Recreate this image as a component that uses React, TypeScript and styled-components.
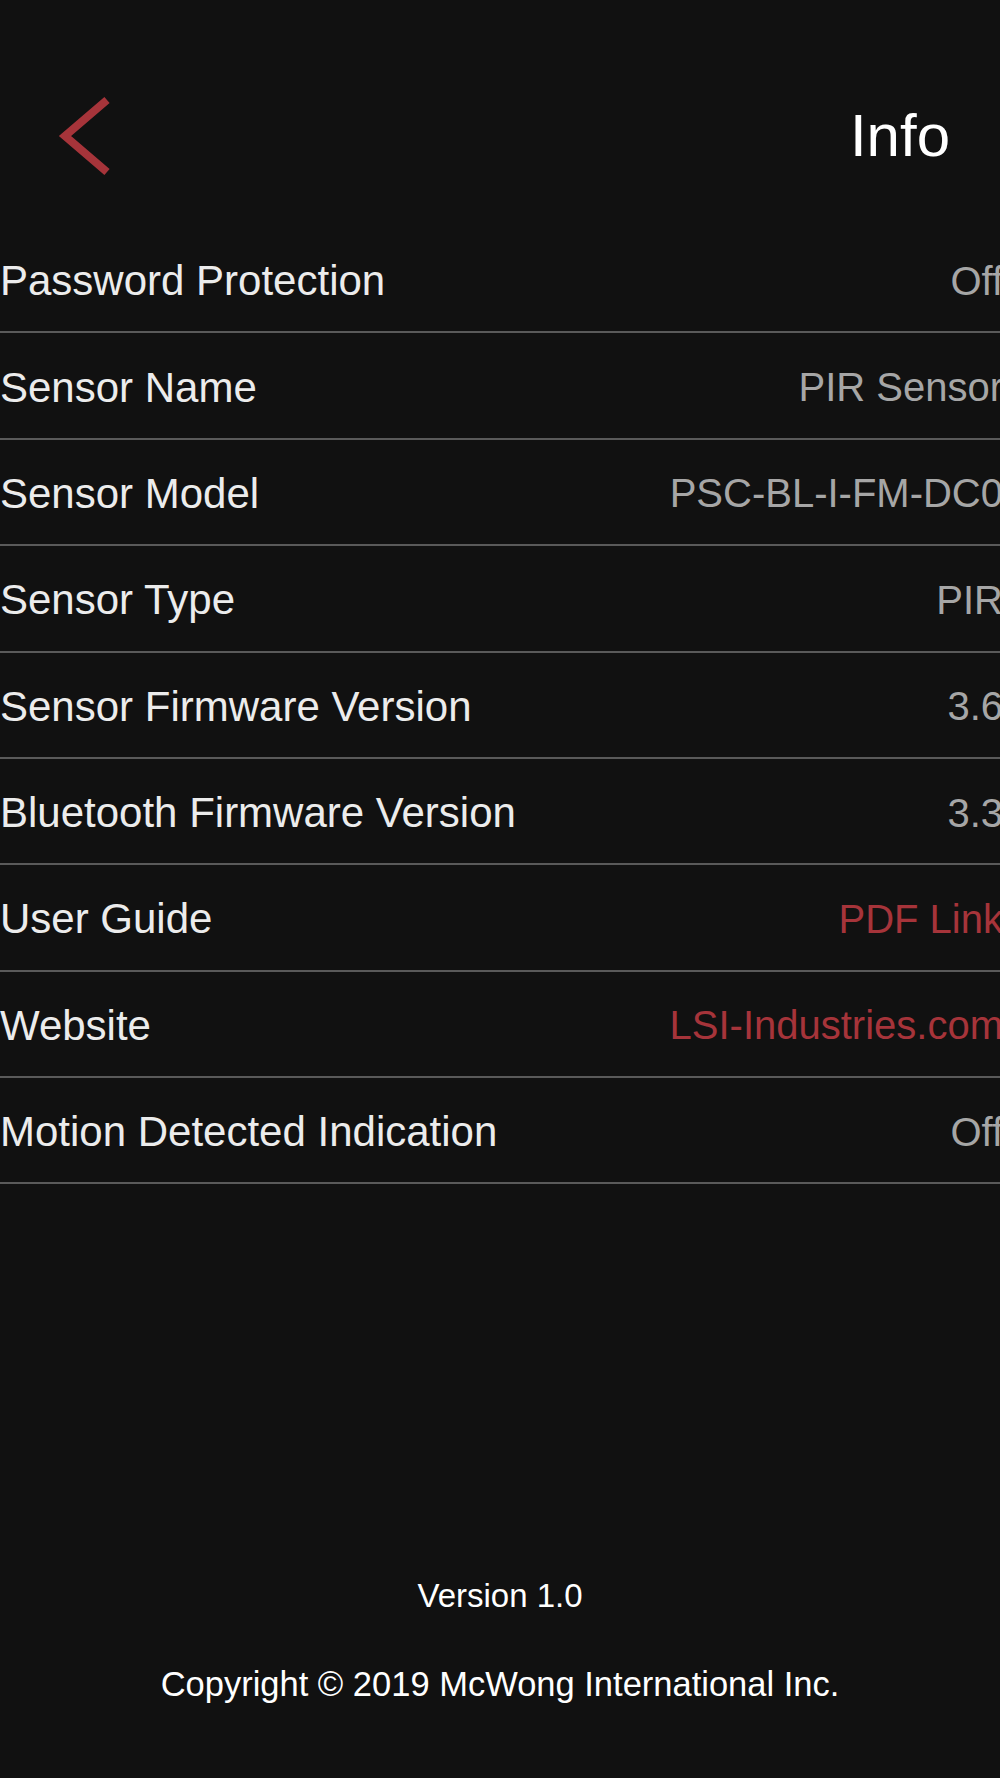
import React from 'react'
import styled, { createGlobalStyle } from 'styled-components'

const GlobalStyle = createGlobalStyle`
  html, body {
    margin: 0;
    padding: 0;
    background-color: #111111;
  }
  body {
    overflow-x: hidden;
    font-family: "Liberation Sans", Arial, sans-serif;
  }
`

const Screen = styled.div`
  width: 1000px;
  min-height: 1778px;
  background-color: #111111;
  display: flex;
  flex-direction: column;
  overflow: hidden;
`

const Header = styled.div`
  height: 227px;
  box-sizing: border-box;
  padding: 44px 50px 0 50px;
  display: flex;
  align-items: center;
  justify-content: space-between;
`

const BackButton = styled.button`
  background: none;
  border: none;
  padding: 0;
  display: flex;
  cursor: pointer;
`

const Title = styled.h1`
  margin: 0;
  font-size: 60px;
  font-weight: 400;
  line-height: 66px;
  color: #ffffff;
`

const List = styled.div`
  display: flex;
  flex-direction: column;
`

const Row = styled.div`
  height: 106.375px;
  box-sizing: border-box;
  display: flex;
  align-items: center;
  justify-content: space-between;
  border-bottom: 2px solid #5a5a5a;
  padding-top: 4px;
`

const Label = styled.span`
  font-size: 42px;
  color: #ececec;
  white-space: nowrap;
`

const Value = styled.span<{ $link?: boolean }>`
  font-size: 40px;
  color: ${(p) => (p.$link ? '#a6343a' : '#a6a6a6')};
  white-space: nowrap;
  margin-right: -3px;
`

const Footer = styled.div`
  margin-top: 392px;
  display: flex;
  flex-direction: column;
  align-items: center;
  gap: 48px;
  color: #ffffff;
`

const VersionText = styled.div`
  font-size: 33px;
  line-height: 40px;
`

const Copyright = styled.div`
  font-size: 34.5px;
  line-height: 40px;
`

const rows: { label: string; value: string; link?: boolean }[] = [
  { label: 'Password Protection', value: 'Off' },
  { label: 'Sensor Name', value: 'PIR Sensor' },
  { label: 'Sensor Model', value: 'PSC-BL-I-FM-DC0' },
  { label: 'Sensor Type', value: 'PIR' },
  { label: 'Sensor Firmware Version', value: '3.6' },
  { label: 'Bluetooth Firmware Version', value: '3.3' },
  { label: 'User Guide', value: 'PDF Link', link: true },
  { label: 'Website', value: 'LSI-Industries.com', link: true },
  { label: 'Motion Detected Indication', value: 'Off' },
]

const BackChevron = () => (
  <svg width="64" height="90" viewBox="0 0 64 90">
    <polyline
      points="57,9 15,45 57,81"
      fill="none"
      stroke="#a6343a"
      strokeWidth="8"
      strokeLinejoin="miter"
    />
  </svg>
)

export default function App() {
  return (
    <>
      <GlobalStyle />
      <Screen>
        <Header>
          <BackButton aria-label="Back">
            <BackChevron />
          </BackButton>
          <Title>Info</Title>
        </Header>
        <List>
          {rows.map((r) => (
            <Row key={r.label}>
              <Label>{r.label}</Label>
              <Value $link={r.link}>{r.value}</Value>
            </Row>
          ))}
        </List>
        <Footer>
          <VersionText>Version 1.0</VersionText>
          <Copyright>Copyright © 2019 McWong International Inc.</Copyright>
        </Footer>
      </Screen>
    </>
  )
}
